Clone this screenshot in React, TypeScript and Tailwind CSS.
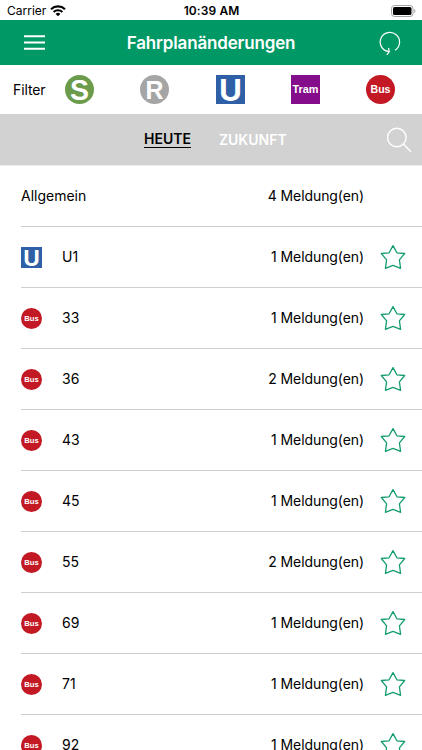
type Line = 'S' | 'R' | 'U' | 'Tram' | 'Bus';

type Message = {
  name: string;
  count: number;
  line?: Line;
};

const FILTERS: Line[] = ['S', 'R', 'U', 'Tram', 'Bus'];

const MESSAGES: Message[] = [
  { name: 'Allgemein', count: 4 },
  { name: 'U1', count: 1, line: 'U' },
  { name: '33', count: 1, line: 'Bus' },
  { name: '36', count: 2, line: 'Bus' },
  { name: '43', count: 1, line: 'Bus' },
  { name: '45', count: 1, line: 'Bus' },
  { name: '55', count: 2, line: 'Bus' },
  { name: '69', count: 1, line: 'Bus' },
  { name: '71', count: 1, line: 'Bus' },
  { name: '92', count: 1, line: 'Bus' },
];

const BADGES = {
  S: { round: true, fill: '#6c9b4c', size: 30, y: 24.8, width: 19, font: 'Liberation Sans' },
  R: { round: true, fill: '#a5a5a5', size: 26, y: 23.7, width: 18, font: 'Liberation Sans' },
  U: { round: false, fill: '#2f5fa7', size: 30, y: 25.7, width: 23, font: 'Inter' },
  Tram: { round: false, fill: '#840d8b', size: 11, y: 18.4, width: 26, font: 'Liberation Sans' },
  Bus: { round: true, fill: '#c21924', size: 11, y: 18.4, width: 20, font: 'Liberation Sans' },
};

function LineBadge({ line, className }: { line: Line; className: string }) {
  const badge = BADGES[line];

  return (
    <svg viewBox="0 0 29 29" overflow="visible" className={className}>
      {badge.round ? (
        <circle cx="14.5" cy="14.5" r="14.5" fill={badge.fill} />
      ) : (
        <rect width="29" height="29" fill={badge.fill} />
      )}
      <text
        x="14.5"
        y={badge.y}
        fill="white"
        fontFamily={`${badge.font}, sans-serif`}
        fontSize={badge.size}
        fontWeight="bold"
        textAnchor="middle"
        textLength={badge.width}
        lengthAdjust="spacingAndGlyphs"
      >
        {line}
      </text>
    </svg>
  );
}

function StatusBar() {
  return (
    <div className="flex h-5 shrink-0 items-center pl-[7px] pr-[6px] pt-[2px] text-[12px] leading-5">
      <div className="flex flex-1 items-center gap-[4px]">
        <span>Carrier</span>
        <svg viewBox="0 0 16 12" className="h-[12px] w-4">
          <path d="M1 4.2A10.2 10.2 0 0 1 15 4.2" fill="none" stroke="black" strokeWidth="2.2" />
          <path d="M3.6 6.9A6.4 6.4 0 0 1 12.4 6.9" fill="none" stroke="black" strokeWidth="2" />
          <path d="M5.6 8.9A3.5 3.5 0 0 1 10.4 8.9L8 11.3Z" />
        </svg>
      </div>
      <span className="font-semibold tracking-[0.1px]">10:39 AM</span>
      <div className="flex flex-1 justify-end">
        <svg viewBox="0 0 25 12" className="h-3 w-[25px]">
          <rect x="0.5" y="0.5" width="21.5" height="11" rx="3" fill="none" stroke="#a2a2a2" />
          <rect x="2" y="2" width="18.5" height="8" rx="1.6" />
          <path d="M23.2 4v4c1.6-.6 1.6-3.4 0-4Z" fill="#a2a2a2" />
        </svg>
      </div>
    </div>
  );
}

function Header() {
  return (
    <header className="flex h-[45px] shrink-0 items-center bg-[#009965] pl-6 pr-[21px] text-white">
      <svg viewBox="0 0 21 15" className="h-[15px] w-[21px]">
        <path d="M0 1.3h21M0 7.5h21M0 13.7h21" stroke="white" strokeWidth="1.9" />
      </svg>
      <h1 className="mr-[2px] flex-1 text-center text-[17px] font-semibold leading-6 tracking-[-0.15px]">
        Fahrplanänderungen
      </h1>
      <svg viewBox="0 0 22 24" className="h-6 w-[22px]" fill="none" stroke="white" strokeWidth="1.2">
        <path d="M16 19.3A9.7 9.7 0 1 0 9.8 20.7M5.8 19.2L10.2 20.8 7.8 23.8M10.2 20.8L9.6 16.8" />
      </svg>
    </header>
  );
}

function MessageRow({ name, count, line }: Message) {
  return (
    <li className="ml-[21px] flex h-[61px] shrink-0 items-center border-b border-[#cfcfcf] pr-4 text-[14px]">
      {line && <LineBadge line={line} className="mr-5 size-[21px]" />}
      <span className="flex-1 pb-px">{name}</span>
      <span className="pb-px tracking-[-0.08px]">{count} Meldung(en)</span>
      <div className="ml-4 flex w-[26px] justify-center">
        {line && (
          <svg
            viewBox="0 0 26 26"
            className="size-[26px]"
            fill="none"
            stroke="#159c70"
            strokeWidth="1.3"
            strokeLinejoin="round"
          >
            <path d="M13 1.6L16.9 8.8 24.7 9.5 19.4 15.8 20.6 24.3 13 21.4 5.4 24.3 6.6 15.8 1.3 9.5 9.1 8.8Z" />
          </svg>
        )}
      </div>
    </li>
  );
}

export default function App() {
  return (
    <div className="flex h-[750px] w-[422px] flex-col overflow-hidden bg-white font-[Inter,sans-serif] text-black">
      <StatusBar />
      <Header />

      <div className="flex h-[49px] shrink-0 items-center pl-[13px] pr-[27px]">
        <span className="w-[52px] text-[14px] tracking-[-0.1px]">Filter</span>
        <div className="flex flex-1 justify-between">
          {FILTERS.map((line) => (
            <LineBadge key={line} line={line} className="size-[29px]" />
          ))}
        </div>
      </div>

      <nav className="flex h-[51px] shrink-0 items-center bg-[#d2d2d2] pl-36 pr-[10px] text-[14px] font-semibold leading-[17px]">
        <button className="mb-px border-b border-black">HEUTE</button>
        <button className="ml-[28px] text-white">ZUKUNFT</button>
        <svg viewBox="0 0 26 26" className="ml-auto size-[26px]" fill="none" stroke="white" strokeWidth="1.4">
          <circle cx="10.8" cy="10.5" r="9.3" />
          <path d="M17.3 17L25 24.7" />
        </svg>
      </nav>

      <ul className="flex flex-1 flex-col overflow-hidden border-t border-[#eeeeee]">
        {MESSAGES.map((message) => (
          <MessageRow key={message.name} {...message} />
        ))}
      </ul>
    </div>
  );
}
